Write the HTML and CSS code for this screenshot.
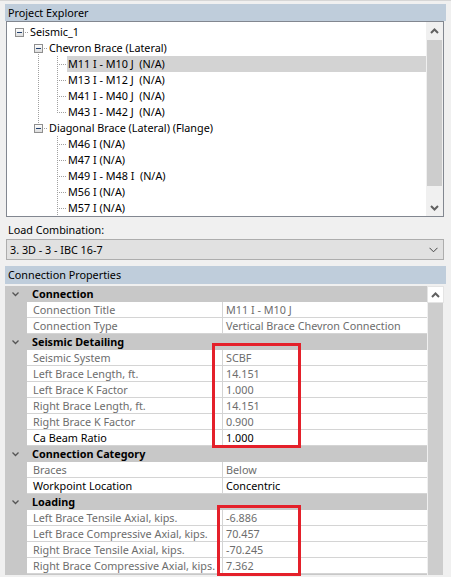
FILE: index.html
```html
<!DOCTYPE html>
<html>
<head>
<meta charset="utf-8">
<link rel="stylesheet" href="styles.css">
</head>
<body>
<div class="topline"></div>
<div class="panel-head pe-head">Project Explorer</div>
<div class="tree">
  <div class="tree-body">
    <div class="row"><span class="c box"><span class="sq"></span></span><span class="t">Seismic_1</span></div>
    <div class="row"><span class="c"></span><span class="c box down"><span class="sq"></span></span><span class="t">Chevron Brace (Lateral)</span></div>
    <div class="row sel"><span class="c"></span><span class="c v"></span><span class="c tee"></span><span class="t">M11 I - M10 J  (N/A)</span></div>
    <div class="row"><span class="c"></span><span class="c v"></span><span class="c tee"></span><span class="t">M13 I - M12 J  (N/A)</span></div>
    <div class="row"><span class="c"></span><span class="c v"></span><span class="c tee"></span><span class="t">M41 I - M40 J  (N/A)</span></div>
    <div class="row"><span class="c"></span><span class="c v"></span><span class="c ell"></span><span class="t">M43 I - M42 J  (N/A)</span></div>
    <div class="row"><span class="c"></span><span class="c box up"><span class="sq"></span></span><span class="t">Diagonal Brace (Lateral) (Flange)</span></div>
    <div class="row"><span class="c"></span><span class="c"></span><span class="c tee"></span><span class="t">M46 I (N/A)</span></div>
    <div class="row"><span class="c"></span><span class="c"></span><span class="c tee"></span><span class="t">M47 I (N/A)</span></div>
    <div class="row"><span class="c"></span><span class="c"></span><span class="c tee"></span><span class="t">M49 I - M48 I  (N/A)</span></div>
    <div class="row"><span class="c"></span><span class="c"></span><span class="c tee"></span><span class="t">M56 I (N/A)</span></div>
    <div class="row"><span class="c"></span><span class="c"></span><span class="c tee"></span><span class="t">M57 I (N/A)</span></div>
  </div>
  <div class="vscroll">
    <div class="arrow"><svg width="9" height="6" viewBox="0 0 9 6"><path d="M1 5 L4.5 1.5 L8 5" fill="none" stroke="#606060" stroke-width="2"/></svg></div>
    <div class="thumb tree-thumb"></div>
    <div class="track"></div>
    <div class="arrow"><svg width="9" height="6" viewBox="0 0 9 6"><path d="M1 1 L4.5 4.5 L8 1" fill="none" stroke="#606060" stroke-width="2"/></svg></div>
  </div>
</div>

<div class="lc-label">Load Combination:</div>
<div class="combo">
  <span>3. 3D - 3 - IBC 16-7</span>
  <svg width="9" height="6" viewBox="0 0 9 6"><path d="M0.5 0.8 L4.5 4.8 L8.5 0.8" fill="none" stroke="#444" stroke-width="1"/></svg>
</div>

<div class="panel-head cp-head">Connection Properties</div>
<div class="pg">
  <div class="pg-rows">
    <div class="cat"><span class="cat-ico"><svg width="7" height="5" viewBox="0 0 7 5"><path d="M0.5 0.5 L3.5 3.5 L6.5 0.5" fill="none" stroke="#555" stroke-width="1.3"/></svg></span><span class="cat-name">Connection</span></div>
    <div class="prop"><span class="m"></span><span class="k ro">Connection Title</span><span class="val ro">M11 I - M10 J</span></div>
    <div class="prop"><span class="m"></span><span class="k ro">Connection Type</span><span class="val ro">Vertical Brace Chevron Connection</span></div>
    <div class="cat"><span class="cat-ico"><svg width="7" height="5" viewBox="0 0 7 5"><path d="M0.5 0.5 L3.5 3.5 L6.5 0.5" fill="none" stroke="#555" stroke-width="1.3"/></svg></span><span class="cat-name">Seismic Detailing</span></div>
    <div class="prop"><span class="m"></span><span class="k ro">Seismic System</span><span class="val ro">SCBF</span></div>
    <div class="prop"><span class="m"></span><span class="k ro">Left Brace Length, ft.</span><span class="val ro">14.151</span></div>
    <div class="prop"><span class="m"></span><span class="k ro">Left Brace K Factor</span><span class="val ro">1.000</span></div>
    <div class="prop"><span class="m"></span><span class="k ro">Right Brace Length, ft.</span><span class="val ro">14.151</span></div>
    <div class="prop"><span class="m"></span><span class="k ro">Right Brace K Factor</span><span class="val ro">0.900</span></div>
    <div class="prop"><span class="m"></span><span class="k">Ca Beam Ratio</span><span class="val">1.000</span></div>
    <div class="cat"><span class="cat-ico"><svg width="7" height="5" viewBox="0 0 7 5"><path d="M0.5 0.5 L3.5 3.5 L6.5 0.5" fill="none" stroke="#555" stroke-width="1.3"/></svg></span><span class="cat-name">Connection Category</span></div>
    <div class="prop"><span class="m"></span><span class="k ro">Braces</span><span class="val ro">Below</span></div>
    <div class="prop"><span class="m"></span><span class="k">Workpoint Location</span><span class="val">Concentric</span></div>
    <div class="cat"><span class="cat-ico"><svg width="7" height="5" viewBox="0 0 7 5"><path d="M0.5 0.5 L3.5 3.5 L6.5 0.5" fill="none" stroke="#555" stroke-width="1.3"/></svg></span><span class="cat-name">Loading</span></div>
    <div class="prop"><span class="m"></span><span class="k ro">Left Brace Tensile Axial, kips.</span><span class="val ro">-6.886</span></div>
    <div class="prop"><span class="m"></span><span class="k ro">Left Brace Compressive Axial, kips.</span><span class="val ro">70.457</span></div>
    <div class="prop"><span class="m"></span><span class="k ro">Right Brace Tensile Axial, kips.</span><span class="val ro">-70.245</span></div>
    <div class="prop"><span class="m"></span><span class="k ro">Right Brace Compressive Axial, kips.</span><span class="val ro">7.362</span></div>
    <div class="cat"></div>
  </div>
  <div class="pg-scroll">
    <div class="arrow pg-up"><svg width="9" height="6" viewBox="0 0 9 6"><path d="M1 5 L4.5 1.5 L8 5" fill="none" stroke="#606060" stroke-width="2"/></svg></div>
    <div class="thumb pg-thumb"></div>
  </div>
</div>

<div class="mark mark-1"></div>
<div class="mark mark-2"></div>
</body>
</html>
```

FILE: styles.css
```css
html, body {
  margin: 0;
  padding: 0;
}
body {
  position: relative;
  width: 451px;
  height: 577px;
  overflow: hidden;
  background: #f0f0f0;
  font-family: "Noto Sans", "Open Sans", sans-serif;
  font-size: 10.8px;
  color: #000;
}
.topline {
  height: 1px;
  background: #d6d6d6;
  margin-bottom: 3px;
}
.panel-head {
  margin-left: 5px;
  width: 438px;
  height: 17px;
  line-height: 17px;
  padding-left: 3px;
  background: #bfcddb;
  color: #000;
}
.tree {
  margin-left: 6px;
  width: 436px;
  height: 194px;
  border: 1px solid #828790;
  background: #fff;
  display: flex;
}
.tree-body {
  flex: 1;
  padding: 2px 0 0 3px;
  overflow: hidden;
}
.row {
  display: flex;
  height: 16px;
  line-height: 16px;
  white-space: pre;
}
.t {
  padding-left: 1px;
  padding-right: 4px;
}
.row.sel .t {
  flex: 1;
  background: #d3d3d3;
}
.c {
  flex: none;
  width: 19px;
  height: 16px;
  background-repeat: no-repeat;
}
.c.v {
  background-image: repeating-linear-gradient(to bottom, #a0a0a0 0 1px, transparent 1px 2px);
  background-position: 9px 0;
  background-size: 1px 16px;
}
.c.tee {
  background-image: repeating-linear-gradient(to bottom, #a0a0a0 0 1px, transparent 1px 2px), repeating-linear-gradient(to right, #a0a0a0 0 1px, transparent 1px 2px);
  background-position: 9px 0, 11px 8px;
  background-size: 1px 16px, 8px 1px;
}
.c.ell {
  background-image: repeating-linear-gradient(to bottom, #a0a0a0 0 1px, transparent 1px 2px), repeating-linear-gradient(to right, #a0a0a0 0 1px, transparent 1px 2px);
  background-position: 9px 0, 11px 8px;
  background-size: 1px 9px, 8px 1px;
}
.c.box {
  background-image: repeating-linear-gradient(to right, #a0a0a0 0 1px, transparent 1px 2px);
  background-position: 15px 8px;
  background-size: 4px 1px;
}
.c.box.down {
  background-image: repeating-linear-gradient(to right, #a0a0a0 0 1px, transparent 1px 2px), repeating-linear-gradient(to bottom, #a0a0a0 0 1px, transparent 1px 2px);
  background-position: 15px 8px, 9px 14px;
  background-size: 4px 1px, 1px 2px;
}
.c.box.up {
  background-image: repeating-linear-gradient(to right, #a0a0a0 0 1px, transparent 1px 2px), repeating-linear-gradient(to bottom, #a0a0a0 0 1px, transparent 1px 2px);
  background-position: 15px 8px, 9px 0;
  background-size: 4px 1px, 1px 4px;
}
.sq {
  display: block;
  box-sizing: border-box;
  width: 9px;
  height: 9px;
  margin: 4px 0 0 5px;
  border: 1px solid #8f8f8f;
  background: linear-gradient(#20406f, #20406f) center / 5px 1px no-repeat, linear-gradient(#fdfdfd, #dedede);
}
.vscroll {
  width: 17px;
  display: flex;
  flex-direction: column;
  background: #f0f0f0;
}
.arrow {
  height: 17px;
  flex: none;
  display: flex;
  align-items: center;
  justify-content: center;
}
.thumb {
  margin: 0 1px;
  background: #cdcdcd;
}
.tree-thumb {
  height: 146px;
  margin-top: 1px;
}
.track {
  flex: 1;
}
.lc-label {
  margin: 4px 0 0 8px;
  height: 17px;
  line-height: 17px;
}
.combo {
  box-sizing: border-box;
  margin: 1px 0 0 6px;
  width: 438px;
  height: 21px;
  border: 1px solid #adadad;
  background: #e1e1e1;
  display: flex;
  align-items: center;
  justify-content: space-between;
  padding: 0 5px 0 3px;
}
.cp-head {
  margin-top: 6px;
  height: 18px;
  line-height: 18px;
}
.pg {
  margin: 2px 0 0 5px;
  width: 439px;
  height: 289px;
  display: flex;
}
.pg-rows {
  flex: 1;
  overflow: hidden;
}
.cat {
  height: 16px;
  line-height: 16px;
  background: #c8c8c8;
  display: flex;
  align-items: center;
}
.cat-ico {
  width: 22px;
  flex: none;
  display: flex;
  padding-left: 7px;
  box-sizing: border-box;
}
.cat-name {
  padding-left: 5px;
  font-weight: bold;
}
.prop {
  display: grid;
  grid-template-columns: 22px 196px 1fr;
  height: 16px;
  line-height: 15px;
}
.m {
  background: #c8c8c8;
}
.k, .val {
  background: #fff;
  border-bottom: 1px solid #d4d4d4;
  white-space: nowrap;
  overflow: hidden;
}
.k {
  padding-left: 6px;
  border-right: 1px solid #d4d4d4;
}
.val {
  padding-left: 3px;
}
.ro {
  color: #6d6d6d;
}
.pg-scroll {
  width: 17px;
  display: flex;
  flex-direction: column;
  background: #f0f0f0;
}
.pg-up {
  background: #fff;
  border: 1px solid #e4e4e4;
  box-sizing: border-box;
}
.pg-thumb {
  flex: 1;
  margin-top: 0;
}
.mark {
  position: absolute;
  border: 3px solid #e4202a;
  box-sizing: border-box;
}
.mark-1 {
  left: 212px;
  top: 343px;
  width: 89px;
  height: 105px;
}
.mark-2 {
  left: 217px;
  top: 505px;
  width: 84px;
  height: 71px;
}
```
